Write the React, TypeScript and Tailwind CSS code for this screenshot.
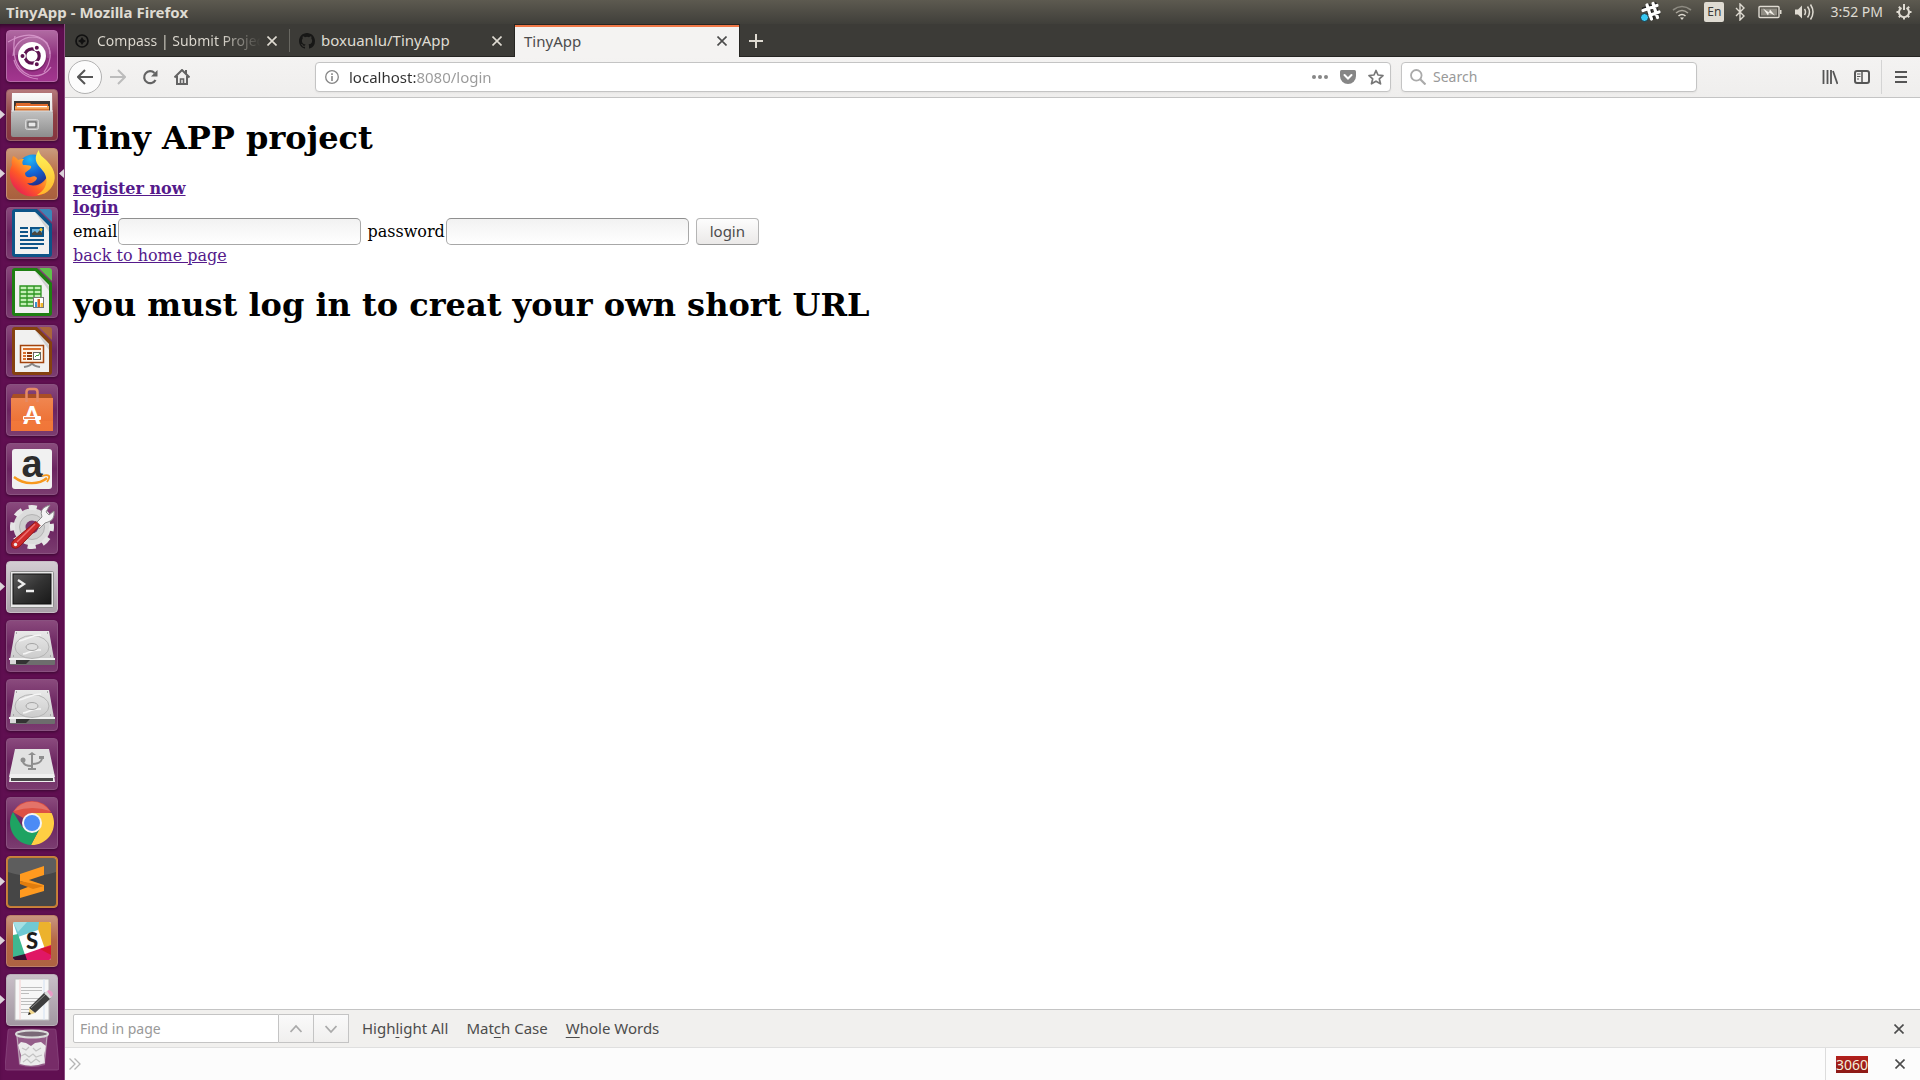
import React from "react";
import type { ReactNode } from "react";

function Svg({ size = 52, box, children, className = "" }: { size?: number; box?: string; children: ReactNode; className?: string }) {
  return (
    <svg width={size} height={size} viewBox={box ?? `0 0 ${size} ${size}`} fill="none" aria-hidden="true" className={`shrink-0 ${className}`}>
      {children}
    </svg>
  );
}

/* ---------- launcher artwork ---------- */

function UbuntuArt() {
  return (
    <Svg>
      <g stroke="#e3a7d8" strokeWidth="1.2" opacity="0.75">
        <path d="M7 26C8 14 16 7 27 7c10 0 17 8 17 17" />
        <path d="M9 6c-3 16-1 33 14 39 10 3 18-2 22-8" />
        <path d="M2 12c10-6 26-12 39 1 5 9 4 20-3 29" />
        <path d="M8 30c3 12 13 18 24 19" />
      </g>
      <path d="M7 25C10 12 18 7 28 7c12 2 17 12 15 21L26 26z" fill="#fff" opacity="0.12" />
      <circle cx="26" cy="27" r="14.5" fill="#3c0a33" opacity="0.35" />
      <circle cx="26" cy="26" r="14" fill="#fff" />
      <circle cx="26" cy="26" r="7.2" stroke="#5d1250" strokeWidth="3.2" />
      <g stroke="#fff" strokeWidth="1.4">
        <circle cx="16.5" cy="26" r="2.7" fill="#5d1250" />
        <circle cx="30.8" cy="17.8" r="2.7" fill="#5d1250" />
        <circle cx="30.8" cy="34.2" r="2.7" fill="#5d1250" />
      </g>
    </Svg>
  );
}

function FilesArt() {
  return (
    <Svg>
      <defs>
        <linearGradient id="fa" x2="0" y2="1"><stop stopColor="#fafafa" /><stop offset="1" stopColor="#c5c5c5" /></linearGradient>
        <linearGradient id="fb" x2="0" y2="1"><stop stopColor="#c2c2c2" /><stop offset="1" stopColor="#8d8d8d" /></linearGradient>
      </defs>
      <path d="M6 4h40l1 42H5z" fill="url(#fa)" />
      <path d="M8 12h36v10H8z" fill="#3a3634" />
      <path d="M10 14h14l1 1h17v7H9z" fill="#e06a2b" />
      <path d="M9 17h34v6H9z" fill="#f5a355" />
      <path d="M11 17h30v1.200H11z" fill="#fff" />
      <path d="M9 20h34v2H9z" fill="#d9722f" />
      <path d="M7 22h38l2 2v22q0 2-2 2H7q-2 0-2-2V24z" fill="url(#fb)" />
      <path d="M5 22h42" stroke="#dcdcdc" />
      <rect x="19.500" y="30.500" width="13" height="10" rx="2" fill="#b5b5b5" stroke="#d8d8d8" />
      <rect x="22" y="33" width="8" height="5" fill="#e8e8e8" stroke="#555" />
    </Svg>
  );
}

function FirefoxArt() {
  return (
    <Svg>
      <defs>
        <linearGradient id="xa" x1="1" y1="0" x2="0.200" y2="1"><stop stopColor="#fff04e" /><stop offset=".35" stopColor="#ffb02c" /><stop offset=".65" stopColor="#ff5a26" /><stop offset="1" stopColor="#e3165b" /></linearGradient>
        <radialGradient id="xb" cx=".4" cy=".15" r=".9"><stop stopColor="#1fb6f5" /><stop offset=".5" stopColor="#1266d6" /><stop offset="1" stopColor="#242a86" /></radialGradient>
        <linearGradient id="xc" x2="0" y2="1"><stop stopColor="#fff65a" /><stop offset="1" stopColor="#ffb52b" /></linearGradient>
      </defs>
      <circle cx="26" cy="28" r="19.500" fill="url(#xa)" />
      <circle cx="27" cy="22" r="15.500" fill="url(#xb)" />
      <path d="M7 8c2 1 4 2 5 4 2-1 4-1 6-1-2 2-2 4-1 6 3 0 6 0 8 1 1 3-3 4-6 7 0 4 3 5 6 4 2-1 5-1 6 1-1 4-6 6-10 5 6 6 16 3 19-3L42 43c-8 7-24 8-32-2C2 33 3 22 6 17c-1-3 0-6 1-9z" fill="url(#xa)" />
      <path d="M33 2c0 5 4 7 8 11 9 9 10 19 4 27-4 5-9 7-14 7 7-4 11-11 9-18-1-5-5-8-8-12-4-6-2-11 1-15z" fill="url(#xc)" />
    </Svg>
  );
}

function Doc({ dark, light, children }: { dark: string; light: string; children: ReactNode }) {
  return (
    <Svg>
      <path d="M9 2h22l15 15v30q0 3-3 3H9q-3 0-3-3V5q0-3 3-3z" fill={dark} />
      <path d="M9 5h20l14 14v28H9z" fill="#f1f1f0" />
      <path d="M29 5l14 15v5z" fill="#cfcfcf" />
      <path d="M33 2h10q3 0 3 3v10z" fill={light} />
      {children}
    </Svg>
  );
}

function WriterArt() {
  return (
    <Doc dark="#0d5488" light="#3a86b8">
      <g stroke="#0d5488" strokeWidth="2">
        <path d="M14 21h8M14 25h8M14 29h8M14 33h24M14 37h24M14 41h18" />
        <rect x="25" y="21" width="12" height="8" fill="#6fb6e2" />
      </g>
      <path d="M26 28v-2l3-2 2 2 3-3 2 3v2z" fill="#4b473f" />
      <circle cx="35" cy="22.500" r="1.500" fill="#f5c731" />
    </Doc>
  );
}

function CalcArt() {
  return (
    <Doc dark="#1f7f12" light="#5fc04b">
      <path d="M14 20h21v20H14z" fill="#c3efb5" />
      <path d="M14 20h21v20H14zM14 24h21M14 28h21M14 32h21M14 36h21M21 20v20M28 20v20" stroke="#2d9420" strokeWidth="1.300" />
      <rect x="27.500" y="31.500" width="10" height="10" fill="#fff" stroke="#777" />
      <path d="M29 36h2v5h-2z" fill="#3b93d0" /><path d="M31.500 33h2.500v8h-2.500z" fill="#e0631c" /><path d="M34.500 37H37v4h-2.500z" fill="#f0b72a" />
    </Doc>
  );
}

function ImpressArt() {
  return (
    <Doc dark="#85410f" light="#a9663b">
      <path d="M18 42q7-1 8-4 1 3 8 4" stroke="#888" strokeWidth="2" />
      <rect x="14.500" y="20.500" width="23" height="17" fill="#fff4e6" stroke="#a3440d" strokeWidth="1.500" />
      <path d="M17 24h18" stroke="#d9702d" strokeWidth="2" />
      <path d="M17 28h3M17 31h3M17 34h3" stroke="#d9702d" strokeWidth="2" />
      <path d="M21 28h5M21 31h5M21 34h5" stroke="#8d3a0c" strokeWidth="2" />
      <rect x="27.500" y="27.500" width="7" height="7" fill="#fff" stroke="#666" />
      <path d="M29 32l2-2 1 1 2-3" stroke="#3a9a34" />
    </Doc>
  );
}

function SoftwareArt() {
  return (
    <Svg>
      <defs><linearGradient id="sa" x2="0" y2="1"><stop stopColor="#f08650" /><stop offset="1" stopColor="#ec6a2c" /></linearGradient></defs>
      <path d="M7 10h38l2 5H5z" fill="#a94e25" />
      <path d="M5 14h42v33H5z" fill="url(#sa)" />
      <path d="M5 37h42v10H5z" fill="#f27b3d" opacity="0.700" />
      <path d="M20.500 18V8q0-3 3-3h5q3 0 3 3v10" stroke="#e58a66" strokeWidth="2.500" />
      <text x="26" y="40" textAnchor="middle" fontSize="24" fontWeight="900" fontFamily="Lato, sans-serif" fill="#fff">A</text>
      <rect x="17" y="32" width="18" height="4" rx="1" fill="#fff" />
      <path d="M18 34h11" stroke="#e9662b" strokeWidth="1.500" />
    </Svg>
  );
}

function AmazonArt() {
  return (
    <Svg>
      <rect x="6" y="6" width="40" height="40" rx="3" fill="#f1f1f1" />
      <text x="26" y="34" textAnchor="middle" fontSize="38" fontWeight="700" fontFamily="Liberation Sans, sans-serif" fill="#2d2d2d">a</text>
      <path d="M8 34c10 8 25 8 33 1" stroke="#f7981d" strokeWidth="2.400" />
      <path d="M36 33c3-1 6-1 7 0 1 2-1 4-2 6" stroke="#f7981d" strokeWidth="1.800" />
    </Svg>
  );
}

function SettingsArt() {
  return (
    <Svg>
      <circle cx="26" cy="25" r="15" stroke="#dcdcdc" strokeWidth="7" />
      <circle cx="26" cy="25" r="19.500" stroke="#e6e6e6" strokeWidth="5" strokeDasharray="8.200 7.120" strokeDashoffset="4" />
      <circle cx="26" cy="25" r="12.500" fill="#cfcfcf" stroke="#b3b3b3" />
      <circle cx="26" cy="25" r="6.500" fill="#7b356c" />
      <path d="M30 21l6-6q-3-8 5-11l3-1-4 7 3 3 5-4q1 9-6 11l-3 1-6 6z" fill="#f4f4f4" stroke="#8d8d8d" />
      <path d="M30 19.500l4 4L14 44q-4 4-8 1-2-4 2-7z" fill="#ce2b2b" stroke="#951515" />
      <path d="M29 22L11 40" stroke="#ed7272" strokeWidth="1.500" />
      <circle cx="9.500" cy="42.500" r="1.700" fill="#eee" />
    </Svg>
  );
}

function TerminalArt() {
  return (
    <Svg>
      <defs><linearGradient id="ta" x2="1" y2="1"><stop stopColor="#5c5c5c" /><stop offset=".5" stopColor="#333" /><stop offset="1" stopColor="#181818" /></linearGradient></defs>
      <rect x="4.500" y="10.500" width="43" height="36" rx="1" fill="#e8e8e8" stroke="#8f8f8f" />
      <rect x="7" y="13" width="38" height="30" fill="url(#ta)" stroke="#111" />
      <path d="M12 19l6 4-6 4M20 30h8" stroke="#eee" strokeWidth="2.300" />
    </Svg>
  );
}

function DriveArt() {
  return (
    <Svg>
      <defs><linearGradient id="da" x2="0" y2="1"><stop stopColor="#e9e9e9" /><stop offset="1" stopColor="#cbcbcb" /></linearGradient></defs>
      <path d="M9 11h34l5 28H4z" fill="url(#da)" />
      <path d="M4 38h45v6q0 1-1 1H5q-1 0-1-1z" fill="#6d6d6d" />
      <path d="M3 38h46v2H3z" fill="#f3f3f3" />
      <path d="M4 40h6v4H4z" fill="#d9d9d9" /><path d="M10 40h14l-4 4H10z" fill="#333" />
      <ellipse cx="26" cy="27" rx="17" ry="11.500" stroke="#b4b4b4" />
      <path d="M13 21c8-1 11-6 22-6M17 34c7-1 8-5 18-4" stroke="#f5f5f5" strokeWidth="1.500" />
      <ellipse cx="26" cy="27" rx="6" ry="3.500" fill="#dedede" stroke="#a5a5a5" />
      <path d="M10 13h1M41 13h1M7 36h1M44 36h1" stroke="#999" strokeWidth="1.500" />
    </Svg>
  );
}

function UsbArt() {
  return (
    <Svg>
      <path d="M9 11h34l6 28H3z" fill="#e2e2e2" />
      <path d="M4 36h44l1 8H3z" fill="#efefef" /><path d="M5 40h42v3H5z" fill="#4b4b4b" />
      <path d="M26 16v15M26 28c-6 0-9-1-9-5M26 26c7 0 9-2 10-5M22 31h8" stroke="#8e8e8e" strokeWidth="2" />
      <path d="M22 17l4-3 4 3z" fill="#8e8e8e" /><circle cx="17" cy="22" r="2.500" fill="#8e8e8e" /><path d="M33 18h5v3h-5z" fill="#8e8e8e" />
    </Svg>
  );
}

function ChromeArt() {
  return (
    <Svg>
      <path d="M26 26L6.900 15A22 22 0 0 1 45.100 15z" fill="#dd5144" />
      <path d="M26 26V16h19.600A22 22 0 0 1 25 48l9-17z" fill="#ffce43" />
      <path d="M26 26l8 5-9 17A22 22 0 0 1 7 15l10 16z" fill="#1ea362" />
      <path d="M8 14A22 22 0 0 1 44 14q-17-6-36 0z" fill="#fff" opacity="0.200" />
      <circle cx="26" cy="26" r="10" fill="#f5f5f5" /><circle cx="26" cy="26" r="8" fill="#4c8bf5" />
    </Svg>
  );
}

function SublimeArt() {
  return (
    <Svg>
      <rect x="2" y="2" width="48" height="48" rx="3" fill="#464646" />
      <path d="M2 2h48v14Q26 24 2 16z" fill="#fff" opacity="0.130" />
      <path d="M14 18l24-8v9l-15 5 15 5v6l-24 7v-8l13-5-13-4z" fill="#ff9a1f" />
      <path d="M14 25l24 5-11 3-13-5z" fill="#e17d0e" />
    </Svg>
  );
}

function SlackArt() {
  return (
    <Svg>
      <defs><clipPath id="sk"><rect x="7" y="7" width="38" height="38" rx="2" /></clipPath></defs>
      <g clipPath="url(#sk)">
        <path d="M7 7h38v38H7z" fill="#fff" />
        <path d="M7 7h28l-3 8-20 7z" fill="#6fc9d4" /><path d="M7 7h14l-9 10z" fill="#a5dfe4" />
        <path d="M33 7h12v25l-6 2-7-20z" fill="#ecb22d" /><path d="M7 20l5-1 7 21-12 3z" fill="#3eb890" />
        <path d="M19 39l20-7 6-2v15H18z" fill="#e01765" /><path d="M7 42l12-3 2 6H7z" fill="#3b1234" />
        <path d="M34 34l11-3v9z" fill="#d7152c" />
      </g>
      <text x="26" y="34" textAnchor="middle" fontSize="22" fontWeight="900" fontFamily="Lato, sans-serif" fill="#1d1d1d">S</text>
    </Svg>
  );
}

function GeditArt() {
  return (
    <Svg>
      <path d="M9 5h34v41H9z" fill="#f7f7f7" stroke="#bcbcbc" />
      <path d="M14 5v41" stroke="#f5cfcf" /><path d="M38 5v41" stroke="#d3e1f2" />
      <path d="M15 13.500h21M15 16.500h21M15 19.500h8M15 24.500h20M15 27.500h17M15 30.500h15M15 35.500h11M15 38.500h8" stroke="#bdbdbd" />
      <path d="M39 18l6 6-16 15-6-5z" fill="#3e3e3e" /><path d="M41 19l-16 15" stroke="#888" />
      <path d="M23 34l6 5-6 2z" fill="#f0d58a" /><path d="M23 38l-1 3 3-1z" fill="#111" />
      <path d="M38 19l3-2 5 5-2 3z" fill="#ddd" /><path d="M41 17l2-1q4 1 4 5l-2 2z" fill="#e99ac6" />
    </Svg>
  );
}

function TrashArt() {
  return (
    <svg width="54" height="43" viewBox="0 0 54 43" fill="none" aria-hidden="true">
      <path d="M5 1h44q2 0 2 2l3 37q0 2-2 2H2q-2 0-2-2L3 3q0-2 2-2z" fill="#8d4a80" fillOpacity="0.500" stroke="#8e4d83" strokeOpacity="0.700" />
      <path d="M11 6l3 31q13 4 26 0l3-31z" fill="#b79ab2" opacity="0.450" />
      <path d="M13 17l3-3 5 1 5 3 4-3 6-1 5 4-2 10 1 7q-13 5-25 1l1-9z" fill="#ececec" />
      <path d="M17 20l4 2 3-3M28 20l3 3 5-3M16 28l4-2 4 3 4-3 3 3 6-2M18 34l4-3 4 4 5-4 4 3" stroke="#c3c3c3" strokeWidth="1.200" />
      <ellipse cx="27" cy="6" rx="16" ry="3.500" fill="#7a6877" stroke="#dadada" strokeWidth="2" />
      <path d="M12 8l3 28M42 8l-3 28" stroke="#d4c8d2" opacity="0.700" />
    </svg>
  );
}

type LauncherItem = { name: string; art: ReactNode; tile: string; running?: boolean; active?: boolean };
const plain = "bg-linear-to-b from-[#8a4a7d] via-[#6b2460] to-[#7b3c70] border-[#8a5280]";
const items: LauncherItem[] = [
  { name: "Search your computer", art: <UbuntuArt />, tile: "bg-linear-to-b from-[#b06aa2] via-[#8c2d7c] to-[#a3368f] border-[#b76aa9]" },
  { name: "Files", art: <FilesArt />, tile: "bg-linear-to-b from-[#b57a7c] via-[#8e4044] to-[#853540] border-[#9b6068]", running: true },
  { name: "Firefox", art: <FirefoxArt />, tile: "bg-linear-to-b from-[#c99a7d] via-[#b96c43] to-[#a8603f] border-[#c48e72]", running: true, active: true },
  { name: "Writer", art: <WriterArt />, tile: plain },
  { name: "Calc", art: <CalcArt />, tile: plain },
  { name: "Impress", art: <ImpressArt />, tile: plain },
  { name: "Software", art: <SoftwareArt />, tile: plain },
  { name: "Amazon", art: <AmazonArt />, tile: plain },
  { name: "Settings", art: <SettingsArt />, tile: plain },
  { name: "Terminal", art: <TerminalArt />, tile: "bg-linear-to-b from-[#d3ccd2] to-[#a9a0a8] border-[#c7bdc5]", running: true },
  { name: "Volume 1", art: <DriveArt />, tile: plain },
  { name: "Volume 2", art: <DriveArt />, tile: plain },
  { name: "USB drive", art: <UsbArt />, tile: plain },
  { name: "Chrome", art: <ChromeArt />, tile: plain },
  { name: "Sublime Text", art: <SublimeArt />, tile: "bg-[#c47a34] border-[#c9853f]", running: true },
  { name: "Slack", art: <SlackArt />, tile: "bg-linear-to-b from-[#c8957f] via-[#b56644] to-[#ad6242] border-[#bd7f68]", running: true },
  { name: "Text Editor", art: <GeditArt />, tile: "bg-linear-to-b from-[#c9bfc8] to-[#a297a1] border-[#b9adb7]", running: true },
];

function Launcher() {
  return (
    <nav aria-label="Launcher" className="flex w-[65px] shrink-0 flex-col items-center gap-[7px] overflow-hidden border-r border-[#8b4b80] bg-[#600f51] pt-[6px] shadow-[inset_0_5px_5px_-3px_#2d0626]">
      {items.map((it) => (
        <div key={it.name} className="relative flex w-full shrink-0 justify-center">
          {it.running && (
            <svg className="absolute left-0 top-[21px]" width="5" height="9" aria-hidden="true"><path d="M0 0l5 4.500L0 9z" fill="#dcd3da" /></svg>
          )}
          <button type="button" aria-label={it.name} className={`flex size-[52px] items-center justify-center rounded-[4px] border shadow-[0_1px_3px_#3a0831] ${it.tile}`}>
            {it.art}
          </button>
          {it.active && (
            <svg className="absolute right-0 top-[21px]" width="5" height="9" aria-hidden="true"><path d="M5 0L0 4.500 5 9z" fill="#dcd3da" /></svg>
          )}
        </div>
      ))}
      <button type="button" aria-label="Trash" className="-mt-[5px] h-[43px] shrink-0"><TrashArt /></button>
    </nav>
  );
}

/* ---------- system bar ---------- */

function SystemBar() {
  return (
    <header className="flex h-6 shrink-0 items-center bg-linear-to-b from-[#5d5a50] to-[#403f3a] pr-[7px] pl-[6px] text-[#dfdbd2]">
      <h1 className="grow text-[15px] font-bold">TinyApp - Mozilla Firefox</h1>
      <Svg size={24} className="mr-[10px]">
        <path d="M9.500 4.500l5 15M15.500 3l4 14.500M4.500 10l15-5M6.500 17l15-5" stroke="#222" strokeWidth="5" />
        <path d="M9 5l4.500 14M15 3.500l4.500 14M5 10.500l14-5M7 17l14-5" stroke="#fff" strokeWidth="3.200" strokeLinecap="round" />
        <circle cx="6.500" cy="17.500" r="4" fill="#36c8f4" stroke="#243238" />
      </Svg>
      <Svg size={20} className="mr-3">
        <path d="M1 8q9-7 18 0" stroke="#8e8b82" strokeWidth="1.600" /><path d="M4 11q6-5 12 0" stroke="#aaa69c" strokeWidth="1.600" />
        <path d="M6.500 14q3.500-3 7 0" stroke="#dfdbd2" strokeWidth="1.600" /><path d="M8 15.500h4L10 18z" fill="#dfdbd2" />
      </Svg>
      <span className="mr-[10px] flex h-5 w-5 items-center justify-center rounded-xs bg-[#dfdbd2] text-xs text-[#3c3b37]">En</span>
      <Svg size={12} box="0 0 12 18" className="mr-3 h-[18px]"><path d="M2 5l8 8-4 4V1l4 4-8 8" stroke="#dfdbd2" strokeWidth="1.400" /></Svg>
      <svg width="24" height="14" fill="none" className="mr-3 shrink-0" aria-hidden="true">
        <rect x="1" y="1.500" width="20" height="11" rx="1" stroke="#dfdbd2" strokeWidth="1.400" /><path d="M22 5h1.500v4H22z" fill="#dfdbd2" />
        <path d="M3 3.500h16v7H3z" fill="#8f8c83" /><path d="M5 3.500l6 4 1-3 5 6-6-3-1 3z" fill="#f3f0e9" />
      </svg>
      <Svg size={20} className="mr-4">
        <path d="M1 7.500h3l4-4v13l-4-4H1z" fill="#dfdbd2" /><path d="M10.500 7q2 3 0 6M13.500 4.500q4 5.500 0 11M16.500 2.500q5 7.500 0 15" stroke="#dfdbd2" strokeWidth="1.500" />
      </Svg>
      <time className="mr-3 text-sm whitespace-nowrap">3:52 PM</time>
      <Svg size={18}>
        <path d="M6.500 4.800a5 5 0 1 0 5 0" stroke="#dfdbd2" strokeWidth="2" /><path d="M9 1v6" stroke="#dfdbd2" strokeWidth="2" />
        <path d="M1.500 9h2.500M14 9h2.500M9 14v2.500M3.800 3.800l1.500 1.500M14.200 3.800l-1.500 1.500M3.800 14.200l1.500-1.500M14.200 14.200l-1.500-1.500" stroke="#dfdbd2" strokeWidth="2" />
      </Svg>
    </header>
  );
}

/* ---------- browser ---------- */

function Cross({ className = "" }: { className?: string }) {
  return <Svg size={10} className={className}><path d="M0.500 0.500l9 9M9.500 0.500l-9 9" stroke="currentColor" strokeWidth="1.600" /></Svg>;
}

function Tabs() {
  return (
    <div role="tablist" className="flex h-[33px] shrink-0 items-stretch border-b border-[#262522] bg-[#3c3b37] pt-px text-[15px] text-[#dfdbd2]">
      <div className="flex w-[224px] items-center pr-3 pl-[10px]">
        <Svg size={14} className="mr-2"><circle cx="7" cy="7" r="6" stroke="#111" strokeWidth="1.700" /><path d="M7 3l1.500 2.500L11 7 8.500 8.500 7 11 5.500 8.500 3 7l2.500-1.500z" fill="#111" /></Svg>
        <button type="button" role="tab" aria-selected="false" className="w-[164px] overflow-hidden bg-linear-to-r from-[#dfdbd2] from-75% to-transparent bg-clip-text text-left text-sm whitespace-nowrap text-transparent">Compass | Submit Project</button>
        <button type="button" aria-label="Close Compass" className="ml-auto"><Cross /></button>
      </div>
      <div className="my-1 w-px bg-[#686761]" />
      <div className="flex w-[224px] items-center pr-3 pl-[9px]">
        <Svg size={16} className="mr-[6px]" box="0 0 16 16">
          <path fill="#171716" d="M8 0C3.580 0 0 3.580 0 8c0 3.540 2.290 6.530 5.470 7.590.4.070.55-.17.55-.38 0-.19-.01-.82-.01-1.490-2.010.37-2.530-.49-2.690-.94-.09-.23-.48-.94-.82-1.130-.28-.15-.68-.52-.01-.53.63-.01 1.080.58 1.230.82.72 1.210 1.870.87 2.330.66.07-.52.28-.87.51-1.070-1.780-.2-3.640-.89-3.640-3.950 0-.87.31-1.590.82-2.150-.08-.2-.36-1.020.08-2.120 0 0 .67-.21 2.200.82a7.600 7.600 0 0 1 4 0c1.530-1.040 2.200-.82 2.200-.82.44 1.100.16 1.920.08 2.120.51.56.82 1.270.82 2.150 0 3.070-1.870 3.750-3.650 3.950.29.25.54.73.54 1.480 0 1.070-.01 1.930-.01 2.200 0 .21.15.46.55.38A8 8 0 0 0 16 8c0-4.420-3.580-8-8-8z" />
        </Svg>
        <button type="button" role="tab" aria-selected="false">boxuanlu/TinyApp</button>
        <button type="button" aria-label="Close boxuanlu/TinyApp" className="ml-auto"><Cross /></button>
      </div>
      <div className="-mt-px -mb-px flex w-[226px] items-center border-x border-t border-[#262522] bg-[#f4f3f2] pr-3 pl-[9px] text-[#4c4c4c] shadow-[inset_0_2px_0_#f07746]">
        <button type="button" role="tab" aria-selected="true">TinyApp</button>
        <button type="button" aria-label="Close TinyApp" className="ml-auto"><Cross /></button>
      </div>
      <button type="button" aria-label="New tab" className="ml-[9px]"><Svg size={14}><path d="M7 0v14M0 7h14" stroke="currentColor" strokeWidth="2" /></Svg></button>
    </div>
  );
}

function NavBar() {
  return (
    <div className="flex h-[41px] shrink-0 items-center border-b border-[#c4c4c4] bg-linear-to-b from-[#f4f3f2] to-[#efeeed] pl-[3px] text-[#636363]">
      <button type="button" aria-label="Back" className="flex size-[34px] items-center justify-center rounded-full border border-[#b1b1b1] bg-[#fcfcfc]">
        <Svg size={16}><path d="M16 8H1.500M8 1L1 8l7 7" stroke="#555" strokeWidth="2" /></Svg>
      </button>
      <button type="button" aria-label="Forward" className="ml-2"><Svg size={16}><path d="M0 8h14.500M8 1l7 7-7 7" stroke="#bcbcbc" strokeWidth="2" /></Svg></button>
      <button type="button" aria-label="Reload" className="ml-4"><Svg size={16}><path d="M13.500 11A6 6 0 1 1 12.500 4" stroke="#636363" strokeWidth="2.200" /><path d="M15.500 1v6.500H9z" fill="#636363" /></Svg></button>
      <button type="button" aria-label="Home" className="ml-4"><Svg size={16}><path d="M0.500 8.500L8 1l7.500 7.500M3 7v8h10V7" stroke="#636363" strokeWidth="2" /><path d="M6.500 15v-5h3v5" stroke="#636363" strokeWidth="1.600" /><path d="M11 1h2v4h-2z" fill="#636363" /></Svg></button>
      <div className="ml-[125px] flex h-[30px] grow items-center rounded-[4px] border border-[#c4c4c4] bg-white pr-[6px] pl-[9px] shadow-[0_1px_2px_#0000000d]">
        <Svg size={14}><circle cx="7" cy="7" r="6.300" stroke="#858585" strokeWidth="1.300" /><path d="M7 6v5M7 3.200v1.700" stroke="#858585" strokeWidth="1.600" /></Svg>
        <input aria-label="Address" defaultValue="localhost:8080/login" className="ml-[10px] min-w-0 grow bg-linear-to-r from-[#303030] from-[67px] to-[#999999] to-[67px] bg-clip-text text-[15px] text-transparent outline-none" />
        <button type="button" aria-label="Page actions"><Svg size={16}><g fill="#868686"><circle cx="2" cy="8" r="2" /><circle cx="8" cy="8" r="2" /><circle cx="14" cy="8" r="2" /></g></Svg></button>
        <button type="button" aria-label="Save to Pocket" className="ml-3"><Svg size={16}><path d="M1.500 1h13Q16 1 16 2.500V7A8 8 0 0 1 0 7V2.500Q0 1 1.500 1z" fill="#868686" /><path d="M4.500 6L8 9.500 11.500 6" stroke="#fff" strokeWidth="2" strokeLinecap="round" /></Svg></button>
        <button type="button" aria-label="Bookmark" className="ml-3"><Svg size={16}><path d="M8 1.500l2 4.500 5 .5-3.700 3.300 1.200 5L8 12.200l-4.500 2.600 1.200-5L1 6.500 6 6z" stroke="#777" strokeWidth="1.700" strokeLinejoin="round" /></Svg></button>
      </div>
      <label className="ml-[10px] flex h-[30px] w-[296px] items-center rounded-[4px] border border-[#c4c4c4] bg-white px-2 shadow-[0_1px_2px_#0000000d]">
        <Svg size={16}><circle cx="6.300" cy="6.300" r="5.300" stroke="#aaa" strokeWidth="1.800" /><path d="M10 10l5.500 5.500" stroke="#aaa" strokeWidth="2.200" /></Svg>
        <input aria-label="Search" placeholder="Search" className="ml-[7px] min-w-0 grow text-sm outline-none placeholder:text-[#999999]" />
      </label>
      <button type="button" aria-label="Library" className="ml-[125px]"><Svg size={16}><path d="M1.500 1v14M5.500 1v14M9 1v14" stroke="#555" strokeWidth="1.800" /><path d="M11 2l4.500 13" stroke="#555" strokeWidth="1.800" /></Svg></button>
      <button type="button" aria-label="Sidebar" className="ml-4"><Svg size={16}><rect x="1" y="2" width="14" height="12" rx="2" stroke="#555" strokeWidth="2" /><path d="M8 2v12" stroke="#555" strokeWidth="1.500" /><path d="M3 5h3.500M3 7.500h3.500M3 10h2" stroke="#555" /></Svg></button>
      <div className="ml-[11px] h-[34px] w-px bg-[#d4d4d4]" />
      <button type="button" aria-label="Menu" className="mr-[13px] ml-[13px]"><Svg size={12}><path d="M0 1h12M0 6h12M0 11h12" stroke="#555" strokeWidth="2" /></Svg></button>
    </div>
  );
}

const field = "ml-px h-[27px] w-[243px] rounded-[5px] border border-[#a8a8a8] border-t-[#8f8f8f] bg-linear-to-b from-[#f2f2f2] to-white px-2 font-['Noto_Sans',sans-serif] text-sm outline-none";

function Page() {
  return (
    <main className="grow overflow-auto bg-white px-2 font-['DejaVu_Serif',serif] text-base leading-[19px] text-black">
      <h1 className="mt-[21px] mb-[22px] text-[32px] leading-[38px] font-bold">Tiny APP project</h1>
      <a href="#register" className="block w-fit font-bold text-[#551a8b] underline">register now</a>
      <a href="#login" className="block w-fit font-bold text-[#551a8b] underline">login</a>
      <form className="mt-px flex items-center" onSubmit={(e) => e.preventDefault()}>
        <label htmlFor="email">email</label>
        <input id="email" type="text" className={field} />
        <label htmlFor="password" className="ml-[6px]">password</label>
        <input id="password" type="password" className={field} />
        <button type="submit" className="ml-[7px] h-[27px] w-[63px] rounded-[4px] border border-[#b5b5b5] border-b-[#999] bg-linear-to-b from-[#fdfdfd] to-[#ebe9e8] font-['Noto_Sans',sans-serif] text-[15px] text-[#4c4c4c]">login</button>
      </form>
      <a href="#home" className="mt-px block w-fit text-[#551a8b] underline">back to home page</a>
      <h1 className="mt-[21px] text-[32px] leading-[38px] font-bold">you must log in to creat your own short URL</h1>
    </main>
  );
}

const step = "flex h-[29px] w-[35px] items-center justify-center border border-l-0 border-[#c4c4c4] bg-linear-to-b from-[#fafafa] to-[#f0efee]";
const key = "underline underline-offset-[3px]";

function FindBar() {
  return (
    <div className="flex h-[38px] shrink-0 items-center border-t border-[#c4c4c4] bg-[#f1f0ee] pr-4 pl-2 text-[15px] text-[#4c4c4c]">
      <input aria-label="Find in page" placeholder="Find in page" className="h-[29px] w-[206px] rounded-l-xs border border-[#c4c4c4] bg-white px-[6px] text-sm outline-none placeholder:text-[#999]" />
      <button type="button" aria-label="Previous match" className={step}><Svg size={12}><path d="M0.500 9L6 3l5.500 6" stroke="#aaa" strokeWidth="1.800" /></Svg></button>
      <button type="button" aria-label="Next match" className={step}><Svg size={12}><path d="M0.500 3L6 9l5.500-6" stroke="#aaa" strokeWidth="1.800" /></Svg></button>
      <button type="button" className="ml-[13px]">High<span className={key}>l</span>ight All</button>
      <button type="button" className="ml-[18px]">Mat<span className={key}>c</span>h Case</button>
      <button type="button" className="ml-[18px]"><span className={key}>W</span>hole Words</button>
      <button type="button" aria-label="Close find bar" className="ml-auto"><Cross /></button>
    </div>
  );
}

function CommandBar() {
  return (
    <div className="flex h-[33px] shrink-0 items-center border-t border-[#dfdfdf] bg-[#fcfcfc] pr-[15px] pl-1 text-sm text-[#4c4c4c]">
      <Svg size={12}><path d="M0.500 0.500L6 6 0.500 11.500M5.500 0.500L11 6l-5.500 5.500" stroke="#b5b5b5" strokeWidth="1.300" /></Svg>
      <input aria-label="Developer command" className="h-full grow outline-none" />
      <div className="mr-[10px] h-full w-px bg-[#dcdcdc]" />
      <button type="button" className="h-[17px] bg-linear-to-b from-[#b3201c] to-[#8c1a16] leading-[17px] text-[#f3efdb]">3060</button>
      <button type="button" aria-label="Close toolbar" className="ml-[27px]"><Cross /></button>
    </div>
  );
}

export default function App() {
  return (
    <div className="flex h-screen flex-col overflow-hidden font-['Noto_Sans',sans-serif]">
      <SystemBar />
      <div className="flex min-h-0 grow">
        <Launcher />
        <div className="flex min-w-0 grow flex-col">
          <Tabs />
          <NavBar />
          <Page />
          <FindBar />
          <CommandBar />
        </div>
      </div>
    </div>
  );
}
